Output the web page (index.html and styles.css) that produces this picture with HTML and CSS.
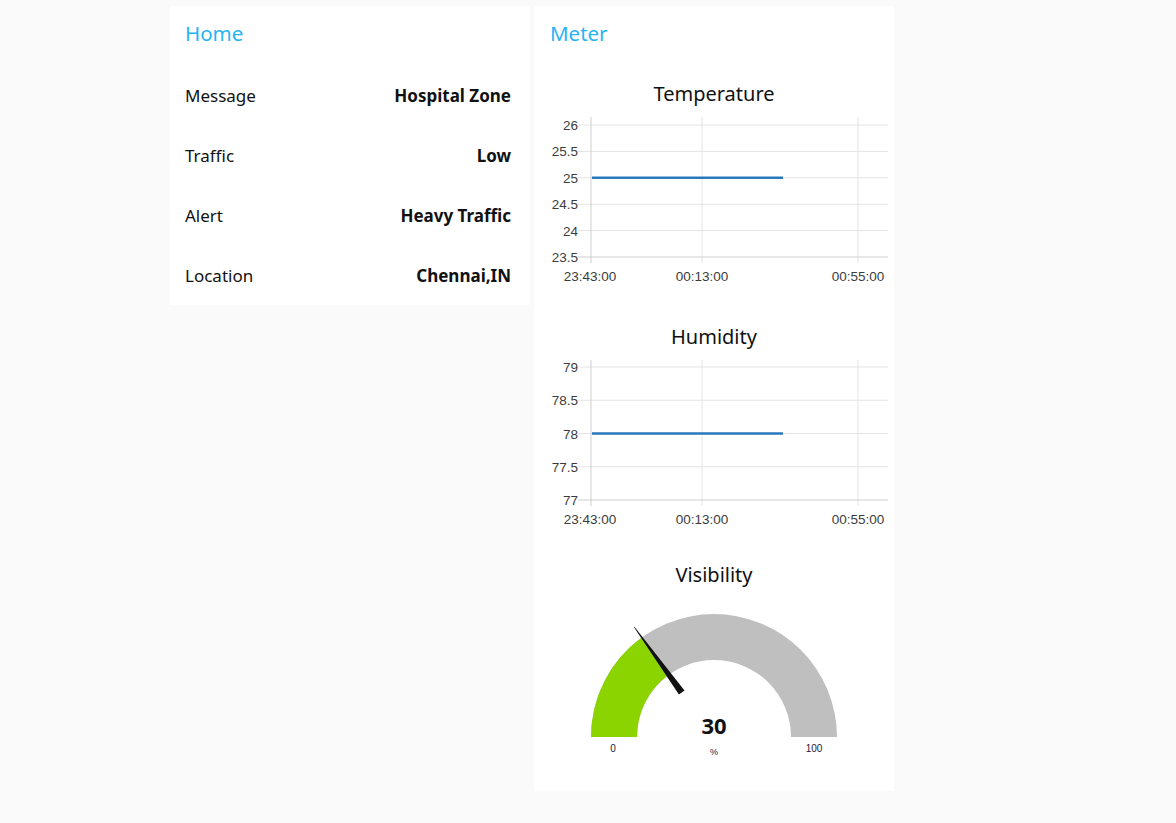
FILE: index.html
```html
<!DOCTYPE html>
<html>
<head>
<meta charset="utf-8">
<title>Dashboard</title>
<link rel="stylesheet" href="styles.css">
</head>
<body>
<div class="page">
  <section class="card card-home">
    <h2 class="card-title">Home</h2>
    <div class="rows">
      <div class="row"><span class="label">Message</span><span class="value">Hospital Zone</span></div>
      <div class="row"><span class="label">Traffic</span><span class="value">Low</span></div>
      <div class="row"><span class="label">Alert</span><span class="value">Heavy Traffic</span></div>
      <div class="row"><span class="label">Location</span><span class="value">Chennai,IN</span></div>
    </div>
  </section>

  <section class="card card-meter">
    <h2 class="card-title">Meter</h2>

    <div class="widget widget-temp">
      <div class="widget-title">Temperature</div>
      <svg class="chart chart-temp" width="360" height="215" viewBox="0 0 360 215">
        <g class="grid">
          <line x1="44" y1="17" x2="354" y2="17"/>
          <line x1="44" y1="43.4" x2="354" y2="43.4"/>
          <line x1="44" y1="69.8" x2="354" y2="69.8"/>
          <line x1="44" y1="96.2" x2="354" y2="96.2"/>
          <line x1="44" y1="122.6" x2="354" y2="122.6"/>
          <line x1="168" y1="9" x2="168" y2="155"/>
          <line x1="324" y1="9" x2="324" y2="155"/>
        </g>
        <g class="axis">
          <line x1="44" y1="149" x2="354" y2="149"/>
          <line x1="57" y1="9" x2="57" y2="155"/>
        </g>
        <g class="ylabels">
          <text x="44" y="22">26</text>
          <text x="44" y="48.4">25.5</text>
          <text x="44" y="74.8">25</text>
          <text x="44" y="101.2">24.5</text>
          <text x="44" y="127.6">24</text>
          <text x="44" y="154">23.5</text>
        </g>
        <g class="xlabels">
          <text x="56" y="173">23:43:00</text>
          <text x="168" y="173">00:13:00</text>
          <text x="324" y="173">00:55:00</text>
        </g>
        <line class="series" x1="58" y1="69.8" x2="249" y2="69.8"/>
      </svg>
    </div>

    <div class="widget widget-hum">
      <div class="widget-title">Humidity</div>
      <svg class="chart chart-hum" width="360" height="210" viewBox="0 0 360 210">
        <g class="grid">
          <line x1="44" y1="16" x2="354" y2="16"/>
          <line x1="44" y1="49.25" x2="354" y2="49.25"/>
          <line x1="44" y1="82.5" x2="354" y2="82.5"/>
          <line x1="44" y1="115.75" x2="354" y2="115.75"/>
          <line x1="168" y1="9" x2="168" y2="155"/>
          <line x1="324" y1="9" x2="324" y2="155"/>
        </g>
        <g class="axis">
          <line x1="44" y1="149" x2="354" y2="149"/>
          <line x1="57" y1="9" x2="57" y2="155"/>
        </g>
        <g class="ylabels">
          <text x="44" y="21">79</text>
          <text x="44" y="54.25">78.5</text>
          <text x="44" y="87.5">78</text>
          <text x="44" y="120.75">77.5</text>
          <text x="44" y="154">77</text>
        </g>
        <g class="xlabels">
          <text x="56" y="173">23:43:00</text>
          <text x="168" y="173">00:13:00</text>
          <text x="324" y="173">00:55:00</text>
        </g>
        <line class="series" x1="58" y1="82.5" x2="249" y2="82.5"/>
      </svg>
    </div>

    <div class="widget widget-gauge">
      <div class="widget-title">Visibility</div>
      <svg class="gauge" width="360" height="196" viewBox="0 0 360 196">
        <path class="gauge-bg" d="M57 148 A123 123 0 0 1 303 148 L257 148 A77 77 0 0 0 103 148 Z"/>
        <path class="gauge-fill" d="M57 148 A123 123 0 0 1 107.70 48.49 L134.74 85.71 A77 77 0 0 0 103 148 Z"/>
        <polygon class="needle" points="100.4,37.8 150.5,101.4 144.9,105.6 100.0,38.2"/>
        <text class="gauge-value" x="180" y="145">30</text>
        <text class="gauge-unit" x="180" y="166">%</text>
        <text class="gauge-minmax" x="79" y="163">0</text>
        <text class="gauge-minmax" x="280" y="163">100</text>
      </svg>
    </div>
  </section>
</div>
</body>
</html>
```

FILE: styles.css
```css
html, body {
  margin: 0;
  padding: 0;
  background: #fafafa;
}

body {
  font-family: "Noto Sans", "Open Sans", sans-serif;
  color: #111;
}

.page {
  display: flex;
  align-items: flex-start;
  gap: 4px;
  padding: 6px 0 0 170px;
}

.card {
  width: 360px;
  box-sizing: border-box;
  background: #fff;
}

.card-home {
  padding: 0 19px 6px 15px;
}

.card-meter {
  height: 785px;
}

.card-title {
  margin: 0;
  height: 54px;
  line-height: 54px;
  font-size: 20.5px;
  font-weight: 400;
  color: #27b4f5;
}

.card-meter .card-title {
  padding-left: 16px;
}

.rows {
  display: flex;
  flex-direction: column;
  gap: 12px;
  margin-top: 11px;
}

.row {
  height: 48px;
  display: flex;
  align-items: center;
  justify-content: space-between;
  font-size: 17px;
}

.label {
  font-weight: 400;
}

.value {
  font-weight: 700;
}

.widget-temp {
  margin-top: 20px;
}

.widget-title {
  height: 28px;
  line-height: 28px;
  text-align: center;
  font-size: 20px;
  color: #111;
}

.chart, .gauge {
  display: block;
}

.grid line {
  stroke: #e4e4e4;
  stroke-width: 1;
}

.axis line {
  stroke: #cfcfcf;
  stroke-width: 1;
}

.ylabels text {
  font-family: "Liberation Sans", Arial, sans-serif;
  font-size: 13.5px;
  fill: #3c3c3c;
  text-anchor: end;
}

.xlabels text {
  font-family: "Liberation Sans", Arial, sans-serif;
  font-size: 13.5px;
  fill: #3c3c3c;
  text-anchor: middle;
}

.series {
  stroke: #2878bd;
  stroke-width: 2.5;
}

.gauge-bg {
  fill: #bfbfbf;
}

.gauge-fill {
  fill: #8bd400;
}

.needle {
  fill: #111;
}

.gauge-value {
  font-family: "Noto Sans", "Open Sans", sans-serif;
  font-size: 22px;
  font-weight: 700;
  fill: #111;
  text-anchor: middle;
}

.gauge-unit {
  font-family: "Liberation Sans", Arial, sans-serif;
  font-size: 9px;
  fill: #1a1a40;
  text-anchor: middle;
}

.gauge-minmax {
  font-family: "Liberation Sans", Arial, sans-serif;
  font-size: 10px;
  fill: #1a1a40;
  text-anchor: middle;
}
```
